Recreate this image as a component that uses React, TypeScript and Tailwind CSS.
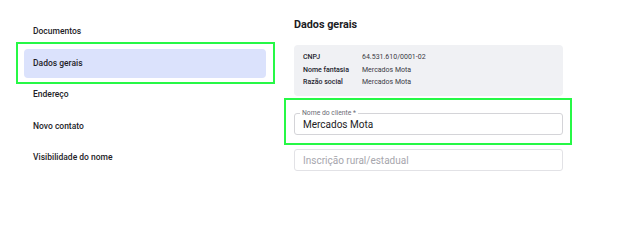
const navItems = ['Documentos', 'Dados gerais', 'Endereço', 'Novo contato', 'Visibilidade do nome'];

const details = [
  { label: 'CNPJ', value: '64.531.610/0001-02' },
  { label: 'Nome fantasia', value: 'Mercados Mota' },
  { label: 'Razão social', value: 'Mercados Mota' },
];

const App = () => {
  const selected = 'Dados gerais';

  return (
    <div className="w-[644px] h-[242px] bg-white flex font-['Roboto',sans-serif]">
      {/* Side menu */}
      <nav className="w-[242px] ml-[24px] pt-[17px] flex flex-col gap-[2.5px]">
        {navItems.map((item) => (
          <div key={item} className="relative">
            <div
              className={`h-[29px] flex items-center pl-[9px] rounded-[4px] text-[8.5px] font-medium text-[#1e1e28] ${
                item === selected ? 'bg-[#dbe2fc]' : ''
              }`}
            >
              {item}
            </div>
            {item === selected && (
              <div className="absolute -left-[8px] -right-[9px] -top-[7px] -bottom-[6px] border-2 border-[#26f846] pointer-events-none" />
            )}
          </div>
        ))}
      </nav>

      {/* Content */}
      <div className="w-[269px] ml-[28px] flex flex-col">
        <h2 className="mt-[17px] h-[16px] leading-[16px] text-[10.8px] font-bold text-[#1c1c24]">Dados gerais</h2>

        <div className="mt-[12px] bg-[#f0f1f4] rounded-[4px] pt-[6px] pb-[7px] pl-[9px]">
          {details.map((row) => (
            <div key={row.label} className="flex h-[12.7px] items-center text-[7px]">
              <span className="w-[59px] font-medium text-[#23232e]">{row.label}</span>
              <span className="text-[#3a3a44]">{row.value}</span>
            </div>
          ))}
        </div>

        <div className="relative mt-[17px]">
          <div className="h-[22px] border border-[#d4d4d8] rounded-[3px] flex items-center pl-[8px] text-[10px] text-[#1c1c24]">
            Mercados Mota
          </div>
          <span className="absolute left-[6px] -top-[4px] px-[2px] bg-white leading-[8px] text-[6.8px] text-[#6b6b75]">
            Nome do cliente *
          </span>
          <div className="absolute -left-[10px] -right-[9px] -top-[15px] -bottom-[10px] border-2 border-[#26f846] pointer-events-none" />
        </div>

        <div className="mt-[14px] h-[22px] border border-[#e2e2e6] rounded-[3px] flex items-center pl-[8px] text-[10px] text-[#a6a6ad]">
          Inscrição rural/estadual
        </div>
      </div>
    </div>
  );
};

export default App;
